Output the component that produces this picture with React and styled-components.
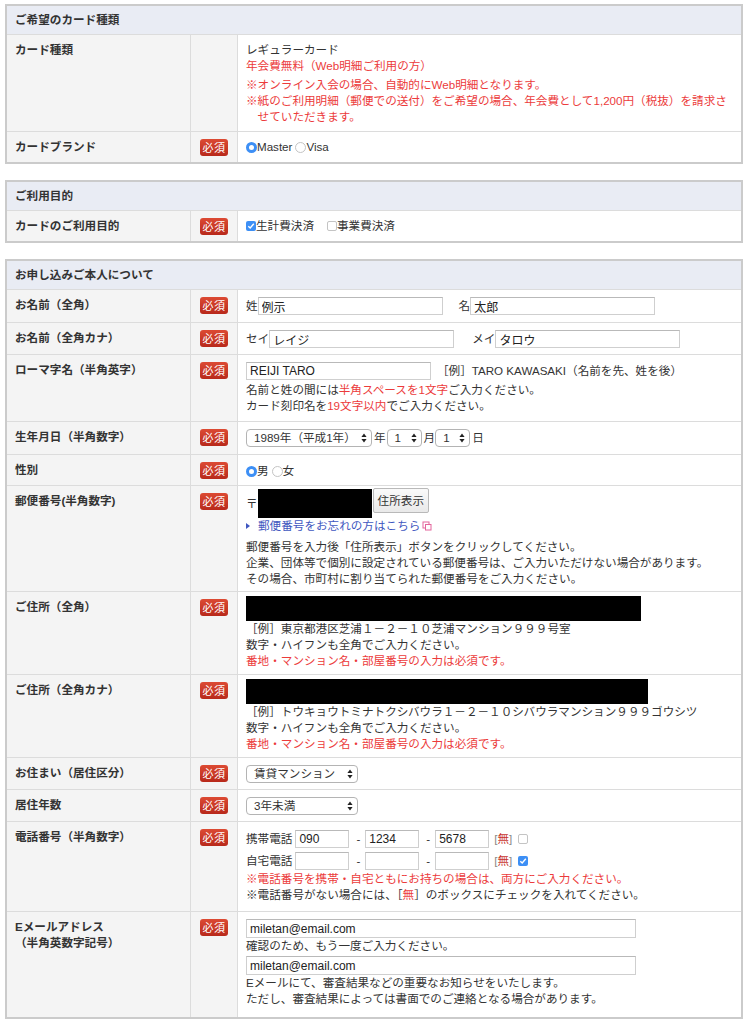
import React from "react";
import styled, { createGlobalStyle } from "styled-components";

// colours
const textColor = "#333333";
const red = "#ec3b3b";
const lineColor = "#dcdcdc";
const labelBg = "#f4f4f4";
const headBg = "#e9ecf4";
const blue = "#3d8ff5";

const GlobalStyle = createGlobalStyle`
  body {
    margin: 0;
    background: #fff;
    color: ${textColor};
    font-family: "Liberation Sans", "Noto Sans CJK JP", sans-serif;
  }
`;

const Page = styled.div`
  padding: 4px 0 6px 5px;
  display: flex;
  flex-direction: column;
  gap: 16px;
`;

const Section = styled.section`
  width: 738px;
  box-sizing: border-box;
  border: 2px solid #cbcbcb;
  font-size: 11.6px;
  line-height: 16px;
`;

const SectionHead = styled.h2`
  margin: 0;
  background: ${headBg};
  padding: 6px 8px;
  font-size: 11.6px;
  line-height: 16px;
  font-weight: bold;
`;

const Row = styled.div`
  display: grid;
  grid-template-columns: 184px 47px 1fr;
  border-top: 1px solid ${lineColor};
`;

const Label = styled.div`
  background: ${labelBg};
  border-right: 1px solid ${lineColor};
  padding: 7px 8px;
  font-weight: bold;
`;

const BadgeCell = styled.div`
  background: ${labelBg};
  border-right: 1px solid ${lineColor};
  padding: 7px 0 0 9px;
`;

const Badge = styled.span`
  display: inline-flex;
  align-items: center;
  justify-content: center;
  width: 28px;
  height: 17px;
  border-radius: 3px;
  background: linear-gradient(#dc4a33, #b8291b);
  color: #fff;
  font-size: 11px;
  letter-spacing: 0.5px;
`;

const Value = styled.div`
  padding: ${(p) => p.$pad || "7px 8px"};
  background: #fff;
`;

const Line = styled.div`
  display: flex;
  align-items: center;
  min-height: ${(p) => p.$h || 16}px;
  margin-top: ${(p) => p.$mt || 0}px;
  margin-bottom: ${(p) => p.$mb || 0}px;
  color: ${(p) => (p.$red ? red : textColor)};
  white-space: nowrap;
`;

const Note = styled.p`
  margin: ${(p) => p.$mt || 0}px 0 0;
  color: ${(p) => (p.$red ? red : textColor)};
  padding-left: ${(p) => (p.$hang ? "1em" : 0)};
  text-indent: ${(p) => (p.$hang ? "-1em" : 0)};
`;

const Red = styled.span`
  color: ${red};
`;

const Input = styled.input`
  box-sizing: border-box;
  width: ${(p) => p.$w}px;
  height: ${(p) => p.$h || 18}px;
  margin: 0 0 0 ${(p) => p.$ml || 0}px;
  padding: 0 3px;
  border: 1px solid #cfcfcf;
  border-top-color: #b9b9b9;
  border-radius: 0;
  font: inherit;
  font-size: 12px;
  color: #222;
  outline: none;
  background: #fff;
`;

const Word = styled.span`
  margin-left: ${(p) => p.$ml || 0}px;
  margin-right: ${(p) => p.$mr || 0}px;
`;

const SelectBox = styled.span`
  box-sizing: border-box;
  display: inline-flex;
  align-items: center;
  justify-content: space-between;
  width: ${(p) => p.$w}px;
  height: 18px;
  margin: 0 ${(p) => p.$mr || 0}px 0 ${(p) => p.$ml || 0}px;
  padding: 0 4px 0 7px;
  border: 1px solid #b4b4b4;
  border-radius: 4px;
  background: #fff;
  font-size: 11.6px;
`;

const RadioDot = styled.span`
  box-sizing: border-box;
  display: inline-block;
  width: 11px;
  height: 11px;
  border-radius: 50%;
  margin-left: ${(p) => p.$ml || 0}px;
  border: ${(p) => (p.$on ? `3px solid ${blue}` : "1px solid #c4c4c4")};
  background: #fff;
`;

const CheckBox = styled.span`
  box-sizing: border-box;
  display: inline-flex;
  align-items: center;
  justify-content: center;
  width: 10px;
  height: 10px;
  border-radius: 2px;
  margin-left: ${(p) => p.$ml || 0}px;
  background: ${(p) => (p.$on ? blue : "#fff")};
  border: ${(p) => (p.$on ? "none" : "1px solid #c4c4c4")};
`;

const Redact = styled.div`
  width: ${(p) => p.$w}px;
  height: ${(p) => p.$h}px;
  background: #000;
  flex: none;
`;

const ZipButton = styled.span`
  box-sizing: border-box;
  display: inline-flex;
  align-items: center;
  height: 25px;
  padding: 0 4px;
  margin-left: 1px;
  align-self: flex-start;
  margin-top: -1px;
  border: 1px solid #b9b9b9;
  border-radius: 2px;
  background: linear-gradient(#fafafa, #e9e9e9);
  font-size: 11.6px;
`;

const HelpLink = styled.a`
  color: #3f57c0;
  text-decoration: none;
  margin-left: 8px;
`;

const Mu = styled.span`
  color: #888;
  margin-left: 5px;
  & b {
    color: #c8322c;
    font-weight: normal;
  }
`;

const Arrows = () => (
  <svg width="6" height="10" viewBox="0 0 6 10">
    <path d="M3 0.5 L5.6 4 H0.4 Z M3 9.5 L5.6 6 H0.4 Z" fill="#222" />
  </svg>
);

const Tick = () => (
  <svg width="8" height="8" viewBox="0 0 8 8">
    <path d="M1.3 4.2 L3.2 6 L6.8 1.8" fill="none" stroke="#fff" strokeWidth="1.4" />
  </svg>
);

const Select = ({ w, ml, mr, children }) => (
  <SelectBox $w={w} $ml={ml} $mr={mr}>
    <span>{children}</span>
    <Arrows />
  </SelectBox>
);

const Required = () => (
  <BadgeCell>
    <Badge>必須</Badge>
  </BadgeCell>
);

const FormRow = ({ label, required = true, pad, children }) => (
  <Row>
    <Label>{label}</Label>
    {required ? <Required /> : <BadgeCell />}
    <Value $pad={pad}>{children}</Value>
  </Row>
);

const PhoneLine = ({ label, values, checked, mt }) => (
  <Line $h={20} $mt={mt}>
    <Word $mr={3}>{label}</Word>
    <Input $w={54} defaultValue={values[0]} readOnly />
    <Word $ml={7} $mr={5}>-</Word>
    <Input $w={54} defaultValue={values[1]} readOnly />
    <Word $ml={7} $mr={5}>-</Word>
    <Input $w={54} defaultValue={values[2]} readOnly />
    <Mu>
      [<b>無</b>]
    </Mu>
    <CheckBox $on={checked} $ml={6}>
      {checked && <Tick />}
    </CheckBox>
  </Line>
);

const App = () => {
  return (
    <Page>
      <GlobalStyle />

      <Section>
        <SectionHead>ご希望のカード種類</SectionHead>
        <FormRow label="カード種類" required={false} pad="7px 8px 6px">
          <Note>レギュラーカード</Note>
          <Note $red>年会費無料（Web明細ご利用の方）</Note>
          <Note $red $mt={3}>※オンライン入会の場合、自動的にWeb明細となります。</Note>
          <Note $red $hang>
            ※紙のご利用明細（郵便での送付）をご希望の場合、年会費として1,200円（税抜）を請求さ
            <br />
            せていただきます。
          </Note>
        </FormRow>
        <FormRow label="カードブランド">
          <Line>
            <RadioDot $on />
            <Word>Master</Word>
            <RadioDot $ml={3} />
            <Word>Visa</Word>
          </Line>
        </FormRow>
      </Section>

      <Section>
        <SectionHead>ご利用目的</SectionHead>
        <FormRow label="カードのご利用目的">
          <Line>
            <CheckBox $on>
              <Tick />
            </CheckBox>
            <Word>生計費決済</Word>
            <CheckBox $ml={13} />
            <Word>事業費決済</Word>
          </Line>
        </FormRow>
      </Section>

      <Section>
        <SectionHead>お申し込みご本人について</SectionHead>

        <FormRow label="お名前（全角）">
          <Line $h={18}>
            <Word>姓</Word>
            <Input $w={185} defaultValue="例示" readOnly />
            <Word $ml={16}>名</Word>
            <Input $w={185} defaultValue="太郎" readOnly />
          </Line>
        </FormRow>

        <FormRow label="お名前（全角カナ）" pad="7px 8px 6px">
          <Line $h={18}>
            <Word>セイ</Word>
            <Input $w={185} defaultValue="レイジ" readOnly />
            <Word $ml={18}>メイ</Word>
            <Input $w={185} defaultValue="タロウ" readOnly />
          </Line>
        </FormRow>

        <FormRow label="ローマ字名（半角英字）">
          <Line $h={18} $mb={2}>
            <Input $w={185} defaultValue="REIJI TARO" readOnly />
            <Word $ml={6}>［例］TARO KAWASAKI（名前を先、姓を後）</Word>
          </Line>
          <Note>
            名前と姓の間には<Red>半角スペースを1文字</Red>ご入力ください。
          </Note>
          <Note>
            カード刻印名を<Red>19文字以内</Red>でご入力ください。
          </Note>
        </FormRow>

        <FormRow label="生年月日（半角数字）">
          <Line $h={18}>
            <Select w={126} mr={2}>
              1989年（平成1年）
            </Select>
            <Word>年</Word>
            <Select w={35} ml={1} mr={2}>
              1
            </Select>
            <Word>月</Word>
            <Select w={35} mr={2}>
              1
            </Select>
            <Word>日</Word>
          </Line>
        </FormRow>

        <FormRow label="性別" pad="8px 8px 6px">
          <Line>
            <RadioDot $on />
            <Word>男</Word>
            <RadioDot $ml={3} />
            <Word>女</Word>
          </Line>
        </FormRow>

        <FormRow label="郵便番号(半角数字)" pad="3px 8px 4px">
          <Line $h={29}>
            <Word>〒</Word>
            <Redact $w={114} $h={29} />
            <ZipButton>住所表示</ZipButton>
          </Line>
          <Line $h={14} $mb={5}>
            <svg width="4" height="6" viewBox="0 0 4 6">
              <path d="M0 0 L4 3 L0 6 Z" fill="#3f57c0" />
            </svg>
            <HelpLink>郵便番号をお忘れの方はこちら</HelpLink>
            <svg width="10" height="10" viewBox="0 0 10 10" style={{ marginLeft: 2 }}>
              <rect x="1" y="1" width="6" height="6" fill="none" stroke="#e3659b" />
              <rect x="3.5" y="3.5" width="5.5" height="5.5" fill="#fff" stroke="#e3659b" />
            </svg>
          </Line>
          <Note>郵便番号を入力後「住所表示」ボタンをクリックしてください。</Note>
          <Note>企業、団体等で個別に設定されている郵便番号は、ご入力いただけない場合があります。</Note>
          <Note>その場合、市町村に割り当てられた郵便番号をご入力ください。</Note>
        </FormRow>

        <FormRow label="ご住所（全角）" pad="4px 8px 5px">
          <Redact $w={395} $h={25} />
          <Note>［例］東京都港区芝浦１－２－１０芝浦マンション９９９号室</Note>
          <Note>数字・ハイフンも全角でご入力ください。</Note>
          <Note $red>番地・マンション名・部屋番号の入力は必須です。</Note>
        </FormRow>

        <FormRow label="ご住所（全角カナ）" pad="4px 8px 5px">
          <Redact $w={402} $h={25} />
          <Note>［例］トウキョウトミナトクシバウラ１－２－１０シバウラマンション９９９ゴウシツ</Note>
          <Note>数字・ハイフンも全角でご入力ください。</Note>
          <Note $red>番地・マンション名・部屋番号の入力は必須です。</Note>
        </FormRow>

        <FormRow label="お住まい（居住区分）" pad="7px 8px 6px">
          <Line $h={18}>
            <Select w={112}>賃貸マンション</Select>
          </Line>
        </FormRow>

        <FormRow label="居住年数" pad="7px 8px 6px">
          <Line $h={18}>
            <Select w={112}>3年未満</Select>
          </Line>
        </FormRow>

        <FormRow label="電話番号（半角数字）" pad="7px 8px 8px">
          <PhoneLine label="携帯電話" values={["090", "1234", "5678"]} />
          <PhoneLine label="自宅電話" values={["", "", ""]} checked mt={2} />
          <Note $red>※電話番号を携帯・自宅ともにお持ちの場合は、両方にご入力ください。</Note>
          <Note>
            ※電話番号がない場合には、［<Red>無</Red>］のボックスにチェックを入れてください。
          </Note>
        </FormRow>

        <FormRow
          label={
            <>
              Eメールアドレス
              <br />
              （半角英数字記号）
            </>
          }
          pad="7px 8px 10px"
        >
          <Line $h={19}>
            <Input $w={390} $h={19} defaultValue="miletan@email.com" readOnly />
          </Line>
          <Note>確認のため、もう一度ご入力ください。</Note>
          <Line $h={19} $mt={2}>
            <Input $w={390} $h={19} defaultValue="miletan@email.com" readOnly />
          </Line>
          <Note>Eメールにて、審査結果などの重要なお知らせをいたします。</Note>
          <Note>ただし、審査結果によっては書面でのご連絡となる場合があります。</Note>
        </FormRow>
      </Section>
    </Page>
  );
};

export default App;
